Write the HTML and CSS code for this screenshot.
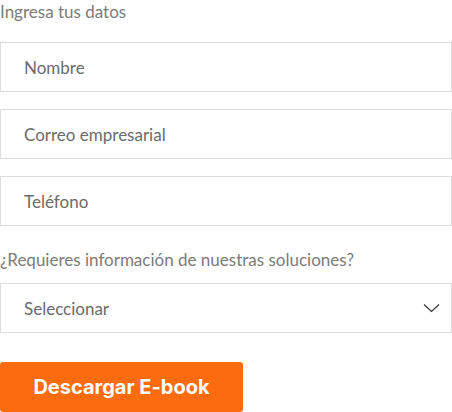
FILE: index.html
```html
<!DOCTYPE html>
<html lang="es">
<head>
<meta charset="utf-8">
<link rel="stylesheet" href="styles.css">
</head>
<body>
<form class="form">
  <p class="label label-top">Ingresa tus datos</p>
  <div class="fields">
    <div class="field">Nombre</div>
    <div class="field">Correo empresarial</div>
    <div class="field">Teléfono</div>
  </div>
  <p class="label label-q">¿Requieres información de nuestras soluciones?</p>
  <div class="field select">
    <span>Seleccionar</span>
    <svg class="chev" width="17" height="10" viewBox="0 0 17 10"><path d="M1 1.5 L8.5 8.5 L16 1.5" fill="none" stroke="#333" stroke-width="1.2"/></svg>
  </div>
  <button type="button" class="btn">Descargar E-book</button>
</form>
</body>
</html>
```
FILE: styles.css
```css
* { box-sizing: border-box; }
html, body { margin: 0; padding: 0; background: #fff; }
body { width: 452px; height: 412px; overflow: hidden; }
.form { display: flex; flex-direction: column; font-family: Lato, "Liberation Sans", sans-serif; }
.label { margin: 0; color: #7b7b7b; font-size: 17px; line-height: 24px; }
.label-top { margin-bottom: 18px; }
.fields { display: flex; flex-direction: column; gap: 17px; }
.field { width: 452px; height: 50px; border: 1px solid #ddd; padding: 0 23px; display: flex; align-items: center; color: #6b6b6b; font-size: 17px; }
.label-q { margin-top: 22px; margin-bottom: 11px; }
.select { justify-content: space-between; padding-right: 11px; }
.chev { display: block; }
.btn { margin-top: 29px; width: 243px; height: 50px; border: 0; border-radius: 3px; background: #fc6c0f; color: #fff; font-family: Inter, "Liberation Sans", sans-serif; font-weight: 700; font-size: 20px; padding: 0; cursor: pointer; }
```
